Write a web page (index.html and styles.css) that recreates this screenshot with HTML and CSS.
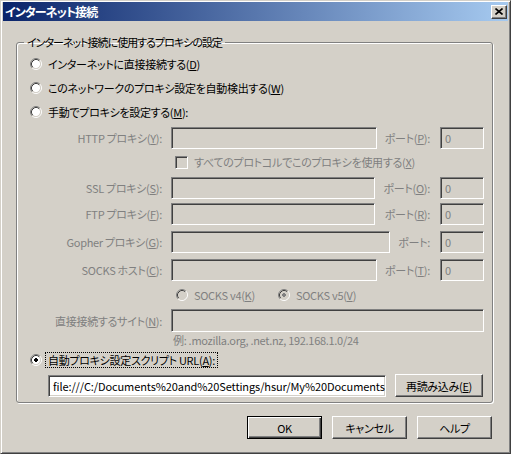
FILE: index.html
```html
<!DOCTYPE html>
<html lang="ja">
<head>
<meta charset="utf-8">
<title>インターネット接続</title>
<link rel="stylesheet" href="styles.css">
</head>
<body>
<div class="window">
  <div class="titlebar">
    <span class="title">インターネット接続</span>
    <span class="close" aria-label="閉じる">
      <svg width="8" height="7" viewBox="0 0 8 7"><path d="M0.5 0.5 L7.5 6.5 M7.5 0.5 L0.5 6.5" stroke="#000" stroke-width="1.6" fill="none"/></svg>
    </span>
  </div>
  <div class="client">
    <fieldset class="group">
      <legend class="group-title">インターネット接続に使用するプロキシの設定</legend>

      <div class="radio-row">
        <svg class="radio" width="12" height="12" viewBox="0 0 12 12"><circle cx="6" cy="6" r="4.2" fill="#fff"/><path d="M2.11 9.89 A5.5 5.5 0 0 1 9.89 2.11" stroke="#808080" fill="none"/><path d="M9.89 2.11 A5.5 5.5 0 0 1 2.11 9.89" stroke="#fff" fill="none"/><path d="M2.82 9.18 A4.5 4.5 0 0 1 9.18 2.82" stroke="#404040" fill="none"/><path d="M9.18 2.82 A4.5 4.5 0 0 1 2.82 9.18" stroke="#d4d0c8" fill="none"/></svg>
        <span class="rlabel">インターネットに直接接続する(<u>D</u>)</span>
      </div>
      <div class="radio-row">
        <svg class="radio" width="12" height="12" viewBox="0 0 12 12"><circle cx="6" cy="6" r="4.2" fill="#fff"/><path d="M2.11 9.89 A5.5 5.5 0 0 1 9.89 2.11" stroke="#808080" fill="none"/><path d="M9.89 2.11 A5.5 5.5 0 0 1 2.11 9.89" stroke="#fff" fill="none"/><path d="M2.82 9.18 A4.5 4.5 0 0 1 9.18 2.82" stroke="#404040" fill="none"/><path d="M9.18 2.82 A4.5 4.5 0 0 1 2.82 9.18" stroke="#d4d0c8" fill="none"/></svg>
        <span class="rlabel">このネットワークのプロキシ設定を自動検出する(<u>W</u>)</span>
      </div>
      <div class="radio-row">
        <svg class="radio" width="12" height="12" viewBox="0 0 12 12"><circle cx="6" cy="6" r="4.2" fill="#fff"/><path d="M2.11 9.89 A5.5 5.5 0 0 1 9.89 2.11" stroke="#808080" fill="none"/><path d="M9.89 2.11 A5.5 5.5 0 0 1 2.11 9.89" stroke="#fff" fill="none"/><path d="M2.82 9.18 A4.5 4.5 0 0 1 9.18 2.82" stroke="#404040" fill="none"/><path d="M9.18 2.82 A4.5 4.5 0 0 1 2.82 9.18" stroke="#d4d0c8" fill="none"/></svg>
        <span class="rlabel">手動でプロキシを設定する(<u>M</u>):</span>
      </div>

      <div class="proxy-row row-http">
        <span class="plabel">HTTP プロキシ(<u>Y</u>):</span>
        <span class="field host host-206"></span>
        <span class="portlabel">ポート(<u>P</u>):</span>
        <span class="field port">0</span>
      </div>

      <div class="check-row">
        <span class="checkbox"></span>
        <span class="dlabel">すべてのプロトコルでこのプロキシを使用する(<u>X</u>)</span>
      </div>

      <div class="proxy-row row-ssl">
        <span class="plabel">SSL プロキシ(<u>S</u>):</span>
        <span class="field host host-204"></span>
        <span class="portlabel">ポート(<u>O</u>):</span>
        <span class="field port">0</span>
      </div>
      <div class="proxy-row row-ftp">
        <span class="plabel">FTP プロキシ(<u>F</u>):</span>
        <span class="field host host-204"></span>
        <span class="portlabel">ポート(<u>R</u>):</span>
        <span class="field port">0</span>
      </div>
      <div class="proxy-row row-gopher">
        <span class="plabel">Gopher プロキシ(<u>G</u>):</span>
        <span class="field host host-219"></span>
        <span class="portlabel">ポート:</span>
        <span class="field port">0</span>
      </div>
      <div class="proxy-row row-socks">
        <span class="plabel">SOCKS ホスト(<u>C</u>):</span>
        <span class="field host host-206"></span>
        <span class="portlabel">ポート(<u>T</u>):</span>
        <span class="field port">0</span>
      </div>

      <div class="socks-row">
        <span class="socks-opt socks-v4">
          <svg class="radio" width="12" height="12" viewBox="0 0 12 12"><circle cx="6" cy="6" r="4.2" fill="#d4d0c8"/><path d="M2.11 9.89 A5.5 5.5 0 0 1 9.89 2.11" stroke="#808080" fill="none"/><path d="M9.89 2.11 A5.5 5.5 0 0 1 2.11 9.89" stroke="#fff" fill="none"/><path d="M2.82 9.18 A4.5 4.5 0 0 1 9.18 2.82" stroke="#404040" fill="none"/><path d="M9.18 2.82 A4.5 4.5 0 0 1 2.82 9.18" stroke="#d4d0c8" fill="none"/></svg>
          <span class="dlabel">SOCKS v4(<u>K</u>)</span>
        </span>
        <span class="socks-opt">
          <svg class="radio" width="12" height="12" viewBox="0 0 12 12"><circle cx="6" cy="6" r="4.2" fill="#d4d0c8"/><path d="M2.11 9.89 A5.5 5.5 0 0 1 9.89 2.11" stroke="#808080" fill="none"/><path d="M9.89 2.11 A5.5 5.5 0 0 1 2.11 9.89" stroke="#fff" fill="none"/><path d="M2.82 9.18 A4.5 4.5 0 0 1 9.18 2.82" stroke="#404040" fill="none"/><path d="M9.18 2.82 A4.5 4.5 0 0 1 2.82 9.18" stroke="#d4d0c8" fill="none"/><rect x="5" y="4" width="2" height="4" fill="#808080"/><rect x="4" y="5" width="4" height="2" fill="#808080"/></svg>
          <span class="dlabel">SOCKS v5(<u>V</u>)</span>
        </span>
      </div>

      <div class="proxy-row row-direct">
        <span class="plabel">直接接続するサイト(<u>N</u>):</span>
        <span class="field host host-313"></span>
      </div>
      <div class="example-row">
        <span class="dlabel">例: .mozilla.org, .net.nz, 192.168.1.0/24</span>
      </div>

      <div class="radio-row auto-row">
        <svg class="radio" width="12" height="12" viewBox="0 0 12 12"><circle cx="6" cy="6" r="4.2" fill="#fff"/><path d="M2.11 9.89 A5.5 5.5 0 0 1 9.89 2.11" stroke="#808080" fill="none"/><path d="M9.89 2.11 A5.5 5.5 0 0 1 2.11 9.89" stroke="#fff" fill="none"/><path d="M2.82 9.18 A4.5 4.5 0 0 1 9.18 2.82" stroke="#404040" fill="none"/><path d="M9.18 2.82 A4.5 4.5 0 0 1 2.82 9.18" stroke="#d4d0c8" fill="none"/><rect x="5" y="4" width="2" height="4" fill="#000"/><rect x="4" y="5" width="4" height="2" fill="#000"/></svg>
        <span class="rlabel focus">自動プロキシ設定スクリプト URL(<u>A</u>):</span>
      </div>
      <div class="url-row">
        <span class="field url">file:///C:/Documents%20and%20Settings/hsur/My%20Documents</span>
        <span class="button reload">再読み込み(<u>E</u>)</span>
      </div>
    </fieldset>

    <div class="buttons">
      <span class="button default">OK</span>
      <span class="button">キャンセル</span>
      <span class="button">ヘルプ</span>
    </div>
  </div>
</div>
</body>
</html>
```

FILE: styles.css
```css
html, body {
  margin: 0;
  padding: 0;
  background: #d4d0c8;
}

body {
  font-family: "Noto Sans CJK JP", "Noto Sans", sans-serif;
  font-size: 11px;
  line-height: 14px;
  letter-spacing: -0.3px;
  font-feature-settings: "palt";
  color: #000;
}

u {
  text-decoration: underline;
  text-underline-offset: 1px;
}

.window {
  width: 511px;
  height: 454px;
  box-sizing: border-box;
  background: #d4d0c8;
  border: 1px solid;
  border-color: #d4d0c8 #404040 #404040 #d4d0c8;
  box-shadow: inset 1px 1px 0 #fff, inset -1px -1px 0 #808080;
  padding: 1px 2px 2px 2px;
  display: flex;
  flex-direction: column;
}

.titlebar {
  height: 19px;
  flex: none;
  display: flex;
  align-items: center;
  justify-content: space-between;
  padding: 0 1px 0 2px;
  background: linear-gradient(to right, #0a246a, #a6caf0);
}

.title {
  color: #fff;
  font-weight: bold;
  font-size: 12px;
  letter-spacing: -0.9px;
}

.close {
  width: 16px;
  height: 14px;
  box-sizing: border-box;
  background: #d4d0c8;
  border: 1px solid;
  border-color: #fff #404040 #404040 #fff;
  box-shadow: inset -1px -1px 0 #808080;
  display: flex;
  align-items: center;
  justify-content: center;
  padding-bottom: 1px;
}

.client {
  flex: 1;
  display: flex;
  flex-direction: column;
}

.group {
  margin: 13px 0 0 13px;
  width: 477px;
  box-sizing: border-box;
  min-inline-size: 0;
  padding: 2px 0 5px 0;
  border: 1px solid #808080;
  border-radius: 3px;
  box-shadow: 1px 1px 0 #fff, inset 1px 1px 0 #fff;
}

.group-title {
  padding: 0 3px;
  margin-left: 7px;
  line-height: 16px;
  height: 16px;
  letter-spacing: -1px;
}

.radio-row {
  height: 24px;
  display: flex;
  align-items: center;
  padding-left: 13px;
}

.radio {
  flex: none;
  display: block;
}

.rlabel {
  margin-left: 6px;
  white-space: nowrap;
}

.dlabel {
  color: #808080;
  white-space: nowrap;
}

.proxy-row {
  height: 22px;
  display: flex;
  align-items: center;
  padding-right: 8px;
}

.row-http { margin-top: 3px; }
.row-ssl { margin-top: 2px; }
.row-ftp { margin-top: 4px; }
.row-gopher { margin-top: 6px; }
.row-socks { margin-top: 6px; }
.row-direct { height: 23px; }

.plabel {
  width: 145px;
  flex: none;
  margin-right: 9px;
  text-align: right;
  color: #808080;
  white-space: nowrap;
}

.portlabel {
  flex: 1;
  text-align: right;
  margin-right: 10px;
  color: #808080;
  white-space: nowrap;
}

.field {
  box-sizing: border-box;
  height: 100%;
  flex: none;
  display: flex;
  align-items: center;
  border: 1px solid;
  border-color: #808080 #fff #fff #808080;
  box-shadow: inset 1px 1px 0 #404040, inset -1px -1px 0 #d4d0c8;
  background: #d4d0c8;
  color: #808080;
  padding-left: 4px;
  white-space: nowrap;
  overflow: hidden;
}

.host-206 { width: 206px; }
.host-204 { width: 204px; }
.host-219 { width: 219px; }
.host-313 { width: 313px; }

.port { width: 44px; }

.check-row {
  height: 26px;
  display: flex;
  align-items: center;
  padding-left: 158px;
}

.checkbox {
  width: 13px;
  height: 13px;
  box-sizing: border-box;
  flex: none;
  margin-right: 6px;
  border: 1px solid;
  border-color: #808080 #fff #fff #808080;
  box-shadow: inset 1px 1px 0 #404040, inset -1px -1px 0 #d4d0c8;
  background: #d4d0c8;
}

.socks-row {
  height: 28px;
  display: flex;
  align-items: center;
  padding-left: 159px;
}

.socks-opt {
  display: flex;
  align-items: center;
  gap: 6px;
}

.socks-v4 {
  width: 102px;
}

.example-row {
  height: 16px;
  display: flex;
  align-items: center;
  padding-left: 156px;
}

.focus {
  margin-left: 3px;
  padding: 0 2px;
  border: 1px dotted #000;
  line-height: 14px;
}

.url-row {
  margin-top: 2px;
  height: 23px;
  display: flex;
  align-items: flex-start;
  padding-left: 31px;
}

.url {
  margin-top: 1px;
  height: 22px;
  width: 338px;
  background: #fff;
  color: #000;
  letter-spacing: -0.1px;
  box-shadow: inset 1px 1px 0 #404040, inset -1px -1px 0 #d4d0c8;
  padding-left: 4px;
  margin-right: 9px;
}

.button {
  box-sizing: border-box;
  height: 23px;
  display: flex;
  align-items: center;
  justify-content: center;
  background: #d4d0c8;
  border: 1px solid;
  border-color: #fff #404040 #404040 #fff;
  box-shadow: inset -1px -1px 0 #808080;
  white-space: nowrap;
}

.reload {
  width: 88px;
}

.buttons {
  margin-top: 13px;
  display: flex;
  justify-content: flex-end;
  gap: 10px;
  padding-right: 16px;
}

.buttons .button {
  width: 75px;
}

.button.default {
  border: 1px solid #000;
  box-shadow: inset 1px 1px 0 #fff, inset -1px -1px 0 #404040, inset -2px -2px 0 #808080;
}
```
